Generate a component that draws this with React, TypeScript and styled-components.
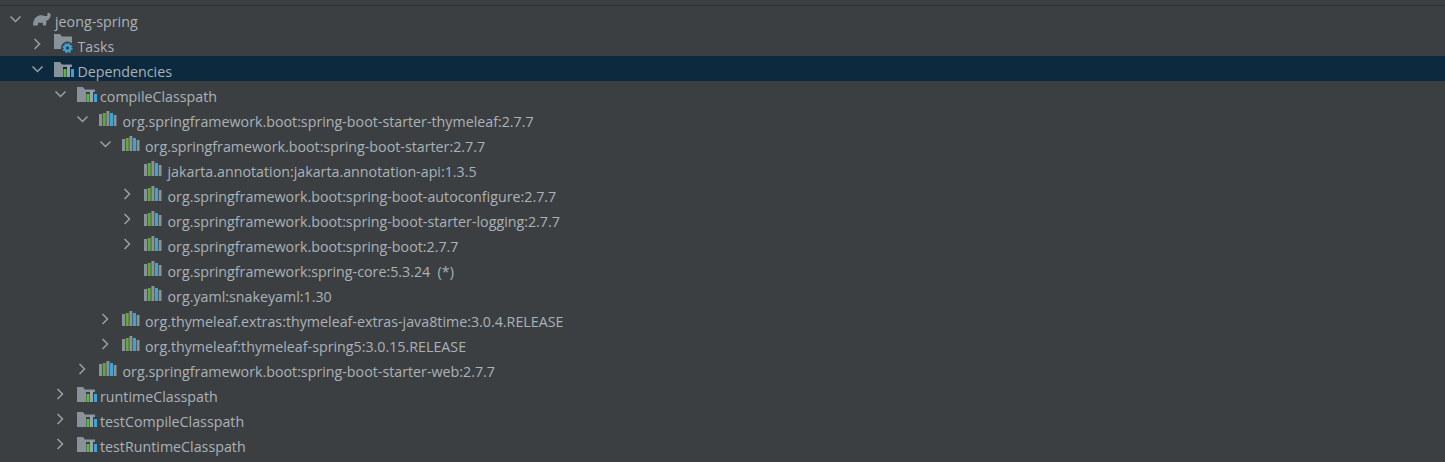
import { createGlobalStyle, styled } from 'styled-components';

type IconKind = 'gradle' | 'tasks' | 'deps' | 'lib';

interface TreeItem {
  depth: number;
  label: string;
  icon: IconKind;
  arrow?: 'open' | 'closed';
  selected?: boolean;
}

const SPRING = 'org.springframework.boot:spring-boot';

const ITEMS: TreeItem[] = [
  { depth: 0, label: 'jeong-spring', icon: 'gradle', arrow: 'open' },
  { depth: 1, label: 'Tasks', icon: 'tasks', arrow: 'closed' },
  { depth: 1, label: 'Dependencies', icon: 'deps', arrow: 'open', selected: true },
  { depth: 2, label: 'compileClasspath', icon: 'deps', arrow: 'open' },
  { depth: 3, label: `${SPRING}-starter-thymeleaf:2.7.7`, icon: 'lib', arrow: 'open' },
  { depth: 4, label: `${SPRING}-starter:2.7.7`, icon: 'lib', arrow: 'open' },
  { depth: 5, label: 'jakarta.annotation:jakarta.annotation-api:1.3.5', icon: 'lib' },
  { depth: 5, label: `${SPRING}-autoconfigure:2.7.7`, icon: 'lib', arrow: 'closed' },
  { depth: 5, label: `${SPRING}-starter-logging:2.7.7`, icon: 'lib', arrow: 'closed' },
  { depth: 5, label: `${SPRING}:2.7.7`, icon: 'lib', arrow: 'closed' },
  { depth: 5, label: 'org.springframework:spring-core:5.3.24  (*)', icon: 'lib' },
  { depth: 5, label: 'org.yaml:snakeyaml:1.30', icon: 'lib' },
  { depth: 4, label: 'org.thymeleaf.extras:thymeleaf-extras-java8time:3.0.4.RELEASE', icon: 'lib', arrow: 'closed' },
  { depth: 4, label: 'org.thymeleaf:thymeleaf-spring5:3.0.15.RELEASE', icon: 'lib', arrow: 'closed' },
  { depth: 3, label: `${SPRING}-starter-web:2.7.7`, icon: 'lib', arrow: 'closed' },
  { depth: 2, label: 'runtimeClasspath', icon: 'deps', arrow: 'closed' },
  { depth: 2, label: 'testCompileClasspath', icon: 'deps', arrow: 'closed' },
  { depth: 2, label: 'testRuntimeClasspath', icon: 'deps', arrow: 'closed' },
];

function Arrow({ open }: { open: boolean }) {
  return (
    <svg width="12" height="12" viewBox="0 0 12 12" fill="none" stroke="#9da0a2" strokeWidth="1.5">
      <path d={open ? 'M.5 3.5 5.5 8.500 10.500 3.500' : 'M2.500 1 7.500 6 2.500 11'} />
    </svg>
  );
}

function LibIcon() {
  return (
    <svg width="18" height="15" viewBox="0 0 18 15">
      <rect x="0" y="3" width="3" height="12" fill="#8a9299" />
      <rect x="3.700" y="2" width="3" height="13" fill="#62a83f" />
      <rect x="7.400" y="0" width="3" height="15" fill="#8a9299" />
      <rect x="11" y="2" width="3" height="13" fill="#3aa6d8" />
      <rect x="14.700" y="4" width="2.800" height="11" fill="#8a9299" />
    </svg>
  );
}

function DepsIcon() {
  return (
    <svg width="20" height="17" viewBox="0 0 20 17">
      <path d="M0 2H6L8 4.500H18V7H9V17H0Z" fill="#87929b" />
      <rect x="9.500" y="9" width="3" height="8" fill="#62b543" />
      <rect x="13" y="5.500" width="3" height="11.500" fill="#9aa3ab" />
      <rect x="17" y="9" width="3" height="8" fill="#3aa6d8" />
    </svg>
  );
}

function TasksIcon() {
  return (
    <svg width="20" height="19" viewBox="0 0 20 19">
      <path d="M0 0H6L8 2.500H18V15H0Z" fill="#87929b" />
      <circle cx="13.500" cy="14" r="6.500" fill="#3c3f41" />
      <circle cx="13.500" cy="14" r="2.800" fill="none" stroke="#3aa6d8" strokeWidth="2.200" />
      <circle cx="13.500" cy="14" r="4.400" fill="none" stroke="#3aa6d8" strokeWidth="1.400" strokeDasharray="1.900 1.560" />
    </svg>
  );
}

function GradleIcon() {
  return (
    <svg width="20" height="14" viewBox="0 0 20 14">
      <path
        d="M1 13.500C1 8 3.500 3.500 9 3.200C11.500 3 13 4.200 14.500 4C15.800 3.800 15.800 2.800 15.200 2.400L15.800 .8C17.500 .3 18.800 1.500 18.600 3.400C18.300 6 16.800 8 14.500 8.600L14 13.500H11L10.600 10.600C9 11.200 7.600 11.200 6.200 10.600L5.800 13.500H3Z"
        fill="#87929b"
      />
    </svg>
  );
}

const ICONS: Record<IconKind, () => React.JSX.Element> = {
  gradle: GradleIcon,
  tasks: TasksIcon,
  deps: DepsIcon,
  lib: LibIcon,
};

export default function App() {
  return (
    <>
      <GlobalStyle />
      <Panel>
        <TopEdge />
        <Tree>
          {ITEMS.map(item => {
            const Icon = ICONS[item.icon];
            return (
              <Row key={item.label} $selected={item.selected} $depth={item.depth}>
                <ArrowSlot>{item.arrow && <Arrow open={item.arrow === 'open'} />}</ArrowSlot>
                <IconSlot>
                  <Icon />
                </IconSlot>
                <Label>{item.label}</Label>
              </Row>
            );
          })}
        </Tree>
      </Panel>
    </>
  );
}

const GlobalStyle = createGlobalStyle`
  html, body {
    margin: 0;
    height: 100%;
    background: #3c3f41;
  }
`;

const Panel = styled.div`
  width: 1445px;
  height: 462px;
  overflow: hidden;
  background: #3c3f41;
`;

const TopEdge = styled.div`
  height: 6px;
  border-bottom: 1px solid #323232;
  box-sizing: border-box;
`;

const Tree = styled.div`
  display: flex;
  flex-direction: column;
`;

const Row = styled.div<{ $selected?: boolean; $depth: number }>`
  display: flex;
  align-items: center;
  height: 25px;
  padding-left: ${p => 9.5 + p.$depth * 22.5}px;
  background: ${p => (p.$selected ? '#0d293e' : 'transparent')};
`;

const ArrowSlot = styled.div`
  display: flex;
  align-items: center;
  width: 22px;
  height: 12px;
`;

const IconSlot = styled.div`
  display: flex;
  align-items: center;
  width: 23.5px;
  height: 19px;
`;

const Label = styled.span`
  padding-top: 5px;
  color: #aab2b9;
  font-family: 'Open Sans', 'Noto Sans', sans-serif;
  font-size: 14.25px;
  white-space: pre;
`;
